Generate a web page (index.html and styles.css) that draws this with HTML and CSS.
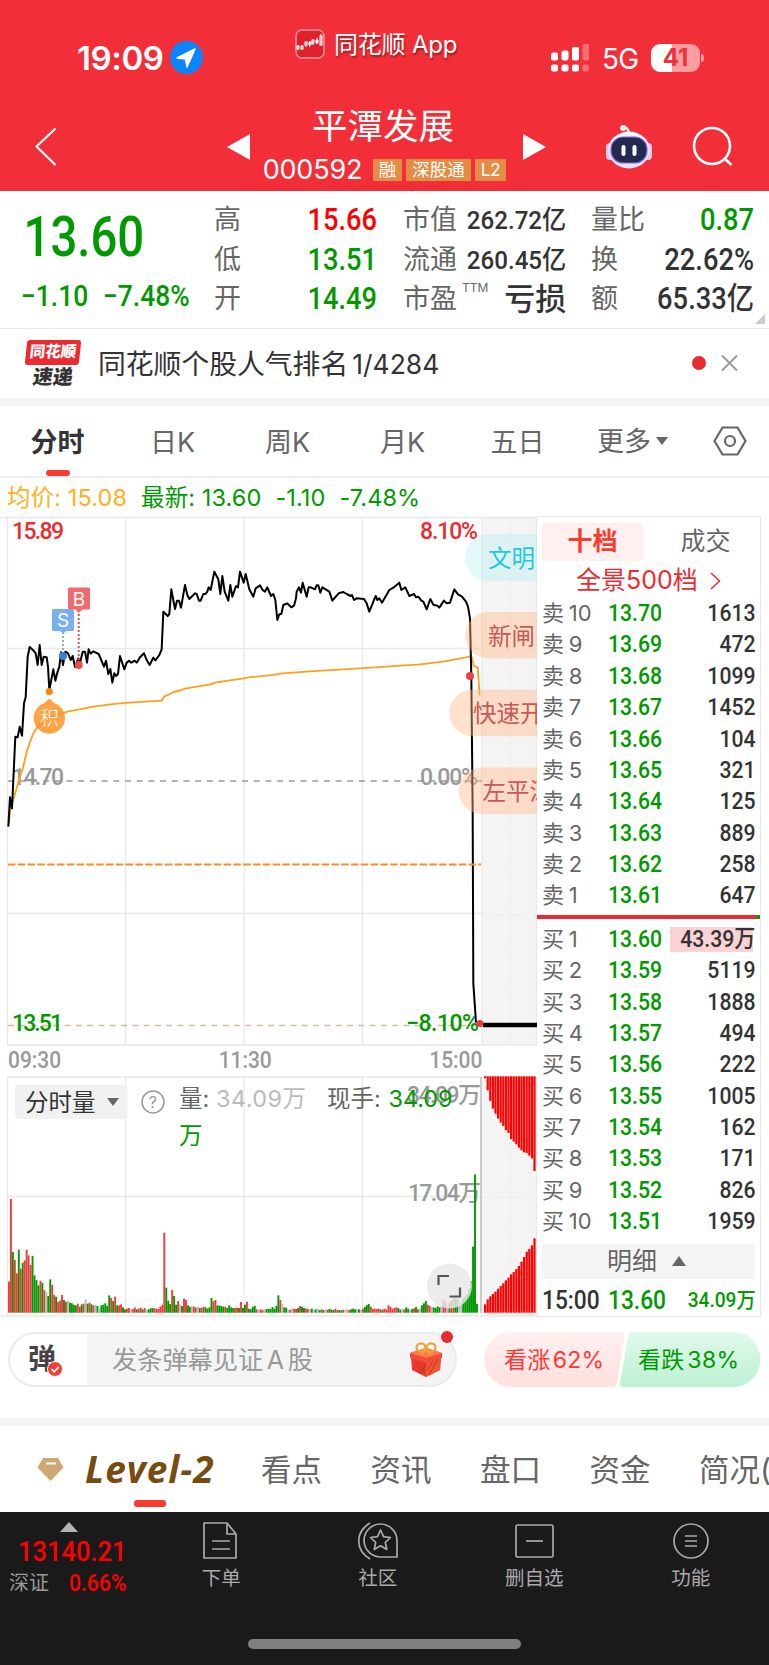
FILE: index.html
```html
<!DOCTYPE html>
<html lang="zh-CN">
<head>
    <meta charset="UTF-8">
    <meta name="viewport" content="width=device-width, initial-scale=1.0">
    <title>平潭发展 000592</title>
    <link rel="stylesheet" href="styles.css">
</head>
<body>
    <header class="header">
        <div class="status-bar">
            <div class="status-left">
                <span class="clock">19:09</span>
                <svg width="33" height="33" viewBox="0 0 33 33"><circle cx="16.5" cy="16.5" r="16.5" fill="#0a84ff"/><path d="M7 17 L25 8 L17 26 L15.500 18 Z" fill="#fff" stroke="#fff" stroke-width="1.500" stroke-linejoin="round"/></svg>
            </div>
            <div class="status-app">
                <svg width="30" height="30" viewBox="0 0 30 30"><rect x="1" y="1" width="28" height="28" rx="6" fill="#e0202a" stroke="#f79a9e" stroke-width="1.500"/><g stroke="#fff" stroke-width="1" fill="none"><path d="M3 16v5M7 16v5M11 12v6M14.500 12v6M18 10v6M22 9v6M26 5v12"/><path d="M2 17h2v3H2zM14 13h2v3h-2zM21 11h2v3h-2z" fill="#fff"/><rect x="6" y="17" width="2" height="3"/><rect x="10" y="13" width="2" height="3"/><rect x="17" y="11" width="2" height="3"/><rect x="25" y="7" width="2" height="9"/></g></svg>
                <span>同花顺 App</span>
            </div>
            <div class="status-right">
                <svg width="39" height="28" viewBox="0 0 39 28" fill="#fff"><rect x="0" y="8.500" width="7" height="8" rx="2"/><rect x="10.500" y="6.500" width="7" height="10" rx="2"/><rect x="21" y="3" width="7" height="13.500" rx="2"/><rect x="0" y="20.500" width="7" height="7" rx="2"/><rect x="10.500" y="20.500" width="7" height="7" rx="2"/><rect x="21" y="20.500" width="7" height="7" rx="2"/><g opacity=".3"><rect x="31.500" y="0" width="6.500" height="16.500" rx="2"/><rect x="31.500" y="20.500" width="6.500" height="7" rx="2"/></g></svg>
                <span class="network">5G</span>
                <div class="battery">41</div>
            </div>
        </div>
        <div class="nav">
            <svg class="nav-back" width="22" height="40" viewBox="0 0 22 40"><path d="M20.500 1.500 L1.500 19.500 L20.500 38" fill="none" stroke="#fff" stroke-width="2.200"/></svg>
            <svg class="nav-prev" width="23" height="26" viewBox="0 0 23 26"><path d="M23 0v26L0 13z" fill="#fff"/></svg>
            <div class="nav-title">
                <h1>平潭发展</h1>
                <div class="nav-code">
                    <span>000592</span>
                    <b>融</b><b>深股通</b><b>L2</b>
                </div>
            </div>
            <svg class="nav-next" width="23" height="26" viewBox="0 0 23 26"><path d="M0 0v26L23 13z" fill="#fff"/></svg>
            <svg class="nav-robot" width="48" height="46" viewBox="0 0 48 46">
                <path d="M24 9 C23 5 21 3 19 3" fill="none" stroke="#f4eff5" stroke-width="2.500"/><circle cx="18" cy="4" r="3" fill="#f4eff5"/>
                <rect x="1" y="19" width="8" height="17" rx="4" fill="#d4ccf2"/><rect x="39" y="19" width="8" height="17" rx="4" fill="#d4ccf2"/>
                <ellipse cx="24" cy="26" rx="21" ry="18.500" fill="#e6e3fa"/><ellipse cx="24" cy="23" rx="19" ry="15" fill="#f8f4fb"/>
                <rect x="6" y="13" width="36" height="26" rx="12" fill="#232a50" stroke="#8570d8" stroke-width="1.200"/>
                <rect x="16.500" y="21" width="4" height="11" rx="2" fill="#fff"/><rect x="27.500" y="21" width="4" height="11" rx="2" fill="#fff"/>
            </svg>
            <svg class="nav-search" width="42" height="42" viewBox="0 0 42 42" fill="none" stroke="#fff" stroke-width="2.600"><circle cx="20" cy="20" r="18"/><path d="M32 32l7.500 7"/></svg>
        </div>
    </header>

    <section class="quote">
        <div class="quote-price">
            <div class="num price down">13.60</div>
            <div class="change down"><span class="num">−1.10</span><span class="num">−7.48%</span></div>
        </div>
        <dl class="stats stats-a">
            <dt>高</dt><dd class="num up">15.66</dd>
            <dt>低</dt><dd class="num down">13.51</dd>
            <dt>开</dt><dd class="num down">14.49</dd>
        </dl>
        <dl class="stats stats-b">
            <dt>市值</dt><dd class="num small">262.72亿</dd>
            <dt>流通</dt><dd class="num small">260.45亿</dd>
            <dt>市盈<sup>TTM</sup></dt><dd class="loss">亏损</dd>
        </dl>
        <dl class="stats stats-c">
            <dt>量比</dt><dd class="num down">0.87</dd>
            <dt>换</dt><dd class="num">22.62%</dd>
            <dt>额</dt><dd class="num">65.33亿</dd>
        </dl>
        <i class="corner"></i>
    </section>

    <section class="news">
        <div class="news-logo"><b>同花顺</b><i>速递</i></div>
        <p>同花顺个股人气排名<span>1/4284</span></p>
        <i class="dot"></i>
        <svg width="17" height="16" viewBox="0 0 17 16"><path d="M1 0.500l15 15M16 0.500l-15 15" stroke="#999" stroke-width="2"/></svg>
    </section>

    <nav class="period-tabs">
        <a class="active">分时</a>
        <a>日K</a>
        <a>周K</a>
        <a>月K</a>
        <a>五日</a>
        <a>更多<i class="caret"></i></a>
        <a class="setting"><svg width="34" height="30" viewBox="0 0 34 30" fill="none" stroke="#666" stroke-width="2.200"><path d="M9.500 1.500h15L32.500 15l-8 13.500h-15L1.500 15z"/><circle cx="17" cy="15" r="5"/></svg></a>
    </nav>

    <div class="legend">
        <span class="avg">均价: 15.08</span>
        <span>最新: 13.60</span>
        <span>-1.10</span>
        <span>-7.48%</span>
    </div>

    <main class="board">
        <div class="charts">
            <svg class="price-chart" width="537" height="530" viewBox="0 516 537 530">
                <rect x="482" y="517" width="55" height="528" fill="#f4f4f4"/>
                <g class="grid">
                    <path d="M0 517.500H537M7.500 517V1045M125.500 517V1045M244 517V1045M362.500 517V1045M482 517V1045M7 648.500H482M7 913.500H482M7 1045H537M536.500 517V1045"/>
                    <path d="M510.500 517V1045M482 650H537M482 915H537" stroke-dasharray="2 3"/>
                </g>
                <path d="M8 781H482" stroke="#999" stroke-width="1.500" stroke-dasharray="6 5.700"/>
                <path d="M8 1025.500H478" stroke="#d8bd94" stroke-width="1.300" stroke-dasharray="6 5.300"/>
                <g class="axis-text">
                    <text x="12" y="539" textLength="52" fill="#eb2b30">15.89</text>
                    <text x="420" y="539" textLength="58" fill="#eb2b30">8.10%</text>
                    <text x="12" y="785" textLength="52" fill="#999">14.70</text>
                    <text x="420" y="785" textLength="58" fill="#999">0.00%</text>
                    <text x="12" y="1030.500" textLength="51" fill="#090">13.51</text>
                    <text x="406" y="1030.500" textLength="73" fill="#090">−8.10%</text>
                </g>
                <g transform="translate(0 510) scale(.33333)" fill="none" stroke-linejoin="round">
                    <polyline stroke="#ff9f1c" stroke-width="5.500" points="26,940 33,885 42,862 50,835 60,800 70,770 80,725 92,690 100,670 115,648 130,635 150,622 180,612 205,604 235,599 280,590 350,581 400,577 485,572 492,560 510,552 520,546 545,540 555,536 590,530 628,524 645,518 730,505 745,502 800,497 825,494 840,491 930,484 1080,475 1260,463 1330,455 1410,440 1416,442 1421,468 1433,472 1439,556"/>
                    <polyline stroke="#000" stroke-width="6" points="25,950 30,862 36,895 46,680 53,682 59,650 66,677 72,580 77,562 83,440 89,411 101,422 107,430 113,465 119,405 125,465 131,440 140,442 144,470 148,540 160,478 166,512 172,488 178,470 183,427 189,465 196,425 204,430 212,450 218,438 225,471 235,445 241,455 248,425 255,425 261,458 266,418 272,431 280,424 296,432 312,470 318,452 325,492 331,477 337,518 343,490 348,498 354,492 360,438 373,478 380,458 387,452 394,458 404,452 410,458 420,442 432,430 440,450 449,465 460,443 466,451 478,435 485,418 490,305 503,318 508,312 514,238 525,297 531,272 537,272 543,293 555,225 562,255 568,267 585,250 590,252 597,272 602,272 610,252 616,252 622,245 626,232 632,240 643,185 655,208 661,252 667,198 674,245 685,272 691,225 697,260 708,228 714,232 720,185 731,218 737,192 748,238 760,260 767,235 780,226 788,240 795,245 802,232 813,258 820,252 826,270 832,330 838,313 844,312 850,285 862,280 874,292 882,287 888,265 890,245 897,232 903,248 908,218 920,260 926,232 932,232 945,238 950,226 955,226 961,248 967,232 988,245 997,272 1016,250 1030,246 1040,252 1052,258 1056,255 1062,270 1070,265 1092,267 1100,280 1108,305 1127,258 1132,270 1138,265 1146,278 1168,240 1180,233 1198,218 1204,240 1216,232 1228,258 1242,252 1248,262 1255,260 1264,272 1270,275 1280,298 1291,267 1300,284 1312,287 1318,293 1332,272 1340,280 1350,278 1363,238 1374,253 1386,260 1398,275 1404,290 1410,325 1414,500 1418,900 1420,1420 1428,1538"/>
                </g>
                <path d="M8 864.500H481" stroke="#ff8a24" stroke-width="2" stroke-dasharray="7.500 2.300"/>
                <path d="M483 1025H537" stroke="#000" stroke-width="4.500"/>
                <circle cx="480" cy="1023.500" r="3.500" fill="#f0383d"/>
                <circle cx="470" cy="676" r="4" fill="#ea4145"/>

                <!-- trade markers -->
                <path d="M63 632V654" stroke="#7db0f2" stroke-width="2" stroke-dasharray="2 2"/>
                <path d="M78.700 610V662" stroke="#ef4a50" stroke-width="2" stroke-dasharray="2 2"/>
                <circle cx="63" cy="656" r="4" fill="#397fd0"/>
                <circle cx="78.700" cy="665" r="4" fill="#ef4a50"/>
                <rect x="52" y="609" width="22" height="22" rx="1.500" fill="#78aff3"/><path d="M59 630h8l-4 4z" fill="#78aff3"/>
                <rect x="68" y="587.500" width="22" height="22" rx="1.500" fill="#f06a6d"/><path d="M75 609h8l-4 4z" fill="#f06a6d"/>
                <text class="marker" x="63" y="627">S</text>
                <text class="marker" x="79" y="605.500">B</text>
                <circle cx="49.300" cy="691.500" r="3.500" fill="#ff7f0e"/>
                <circle cx="49.300" cy="718" r="15.700" fill="#ff962e" opacity=".88"/><path d="M44 703.500l5.300-5 5.300 5z" fill="#ff9f48"/>
                <text class="marker light" x="49.300" y="724.500">积</text>

                <!-- bullet comments -->
                <g class="bullets">
                    <path class="cyan" d="M537 534H488.500a23.300 23.300 0 0 0 0 47H537z"/>
                    <path d="M537 612H488.500a23.300 23.300 0 0 0 0 46.600H537z"/>
                    <path d="M537 689.700H472.500a23.300 23.300 0 0 0 0 46.600H537z"/>
                    <path d="M537 767.500H482a23.300 23.300 0 0 0 0 46.600H537z"/>
                    <text class="cyan-text" x="488" y="566.500">文明</text>
                    <text x="488" y="644.500">新闸</text>
                    <text x="473" y="722">快速开</text>
                    <text x="482.500" y="799.500">左平潭</text>
                </g>
            </svg>

            <div class="time-axis"><span class="num">09:30</span><span class="num">11:30</span><span class="num">15:00</span></div>

            <svg class="volume-chart" width="537" height="241" viewBox="0 1076 537 241">
                <rect x="482" y="1077" width="55" height="239" fill="#f4f4f4"/>
                <g class="grid">
                    <path d="M7 1077H482M7.500 1077V1316M125.500 1077V1316M244 1077V1316M362.500 1077V1316M7 1196.500H482M0 1316H537M536.500 1077V1316"/>
                    <path d="M510.500 1077V1316M482 1197.500H537" stroke-dasharray="2 3"/>
                </g>
                <path d="M481 1077V1313" stroke="#bbb" stroke-width="1.500"/>
                <g class="axis-text">
                    <text x="407" y="1103" textLength="74" fill="#999">34.09万</text>
                    <text x="408" y="1201" textLength="73" fill="#999">17.04万</text>
                </g>
                <g id="volumeBars"></g>
                <g id="auctionBars"></g>

                <rect x="15" y="1084.500" width="112.500" height="34.500" rx="3" fill="#f1f1f1"/>
                <path d="M107 1098h12l-6 8z" fill="#666"/>
                <circle cx="153" cy="1102" r="11" fill="none" stroke="#999" stroke-width="1.500"/>
                <g class="volume-text">
                    <text x="25" y="1110.500" fill="#333">分时量</text>
                    <text x="148.800" y="1107.500" class="help">?</text>
                    <text x="179" y="1107">量:</text>
                    <text x="216" y="1106.500" textLength="90" fill="#bbb">34.09万</text>
                    <text x="327" y="1107">现手:</text>
                    <text x="388.500" y="1106.500" textLength="64" fill="#090">34.09</text>
                    <text x="179" y="1144" fill="#090">万</text>
                </g>
                <circle cx="449.500" cy="1286" r="22.500" fill="#e8e8e8" opacity=".82"/>
                <path d="M438.500 1285v-9h10.500M460 1287.500v9h-10.500" fill="none" stroke="#555" stroke-width="2.200"/>
            </svg>
        </div>

        <aside class="book">
            <div class="book-tabs"><b>十档</b><span>成交</span></div>
            <div class="book-more">全景500档 <svg width="11" height="18" viewBox="0 0 11 18"><path d="M1 1l8.500 8L1 17" fill="none" stroke="#eb2b30" stroke-width="1.500"/></svg></div>
            <div class="book-rows" id="asks"></div>
            <div class="book-line"></div>
            <div class="book-rows" id="bids"></div>
            <div class="book-detail">明细<i></i></div>
            <div class="book-last"><span class="num">15:00</span><span class="num down">13.60</span><span class="num down">34.09万</span></div>
        </aside>
    </main>

    <section class="danmaku">
        <div class="danmaku-input">
            <div class="danmaku-switch">弹<svg width="16" height="16" viewBox="0 0 16 16"><circle cx="8" cy="8" r="7.500" fill="#fb3a36" stroke="#fff"/><path d="M4.500 8l2.700 2.800 4.500-5" fill="none" stroke="#fff" stroke-width="1.800"/></svg></div>
            <span class="placeholder">发条弹幕见证 A 股</span>
            <svg class="gift" width="34" height="36" viewBox="0 0 34 36">
                <path d="M2 14l15 5v16L3 28zM32 14l-15 5v16l14-7z" fill="#e6382c"/><path d="M17 19l15-5-1 14-14 7z" fill="#f0562f"/>
                <path d="M1 11l16-5 16 5v5l-16 5-16-5z" fill="#f04c36"/><path d="M1 11l16-5 16 5-16 5z" fill="#ff7852"/>
                <path d="M17 22l-6 10M29 17l-9 16M24 19l-6 9" stroke="#c92a24"/>
                <g fill="none" stroke="#eda234" stroke-width="2.200"><ellipse cx="12" cy="5.500" rx="4.500" ry="4.200"/><ellipse cx="22" cy="5.500" rx="4.500" ry="4.200"/><path d="M17 7l-5 6M17 7l5 6"/></g>
            </svg>
            <i class="badge"></i>
        </div>
        <div class="vote">
            <svg width="277" height="55" viewBox="0 0 277 55">
                <defs>
                    <linearGradient id="bull" x2="0" y2="1"><stop offset="0" stop-color="#fff0ef"/><stop offset="1" stop-color="#ffe0de"/></linearGradient>
                    <linearGradient id="bear" x2="0" y2="1"><stop offset="0" stop-color="#e1f9ec"/><stop offset="1" stop-color="#bdf0d4"/></linearGradient>
                </defs>
                <path d="M27.500 0H138q3 0 2.600 3L133 51q-1 4-5 4H27.500a27.500 27.500 0 0 1 0-55z" fill="url(#bull)"/>
                <path d="M249 0H148q-3 0-3.600 3L136 51q-.5 4 3 4H249a27.500 27.500 0 0 0 0-55z" fill="url(#bear)"/>
                <text x="20" y="36" textLength="100" fill="#fb3a36">看涨 62%</text>
                <text x="154" y="36" textLength="101" fill="#090">看跌 38%</text>
            </svg>
        </div>
    </section>

    <nav class="info-tabs">
        <svg width="27" height="25" viewBox="0 0 27 25"><path d="M6 1h15l5.500 9.500L13.500 24 .5 10.500z" fill="#cda874"/><path d="M9 6.500h10" stroke="#fff" stroke-width="2"/></svg>
        <a class="level2">Level-2</a>
        <a>看点</a>
        <a>资讯</a>
        <a>盘口</a>
        <a>资金</a>
        <a>简况(F10)</a>
    </nav>

    <footer class="toolbar">
        <div class="index">
            <i></i>
            <div class="num index-value">13140.21</div>
            <div class="index-row"><span>深证</span><span class="num">0.66%</span></div>
        </div>
        <div class="tools">
            <a><svg width="40" height="40" viewBox="0 0 40 40"><path d="M3 2h23l9 11v24H3zM26 2v11h9M11 20h18M11 28h18"/></svg>下单</a>
            <a><svg width="42" height="40" viewBox="0 0 42 40"><path d="M13 2C-2 11-2 29 13 38M40 36H24a16.500 16.500 0 1 1 16-16.500z"/><path d="M23.500 9l3 6.700 7 .8-5.200 4.800 1.500 7.200-6.300-3.700-6.300 3.700 1.500-7.200-5.200-4.800 7-.8z"/></svg>社区</a>
            <a><svg width="40" height="40" viewBox="0 0 40 40"><rect x="2" y="4" width="37" height="32" rx="1.500"/><path d="M12 20h17"/></svg>删自选</a>
            <a><svg width="40" height="40" viewBox="0 0 40 40"><circle cx="20" cy="20" r="17"/><path d="M14 15h12M14 20h12M14 25h12"/></svg>功能</a>
        </div>
        <div class="home-bar"></div>
    </footer>

    <script src="chart.js"></script>
</body>
</html>
```

FILE: styles.css
```css
* {
    box-sizing: border-box;
    margin: 0;
    padding: 0;
}

body {
    width: 769px;
    font-family: Inter, 'Noto Sans CJK SC', sans-serif;
    background-color: #fff;
    color: #333;
    overflow-x: hidden;
}

svg {
    display: block;
    flex-shrink: 0;
}

i {
    font-style: normal;
}

.num {
    font-family: Roboto, 'Noto Sans CJK SC', sans-serif;
    font-weight: 500;
    white-space: nowrap;
    transform: scaleX(0.91);
    transform-origin: left center;
}

.up {
    color: #f00;
}

.down {
    color: #090;
}

/* header */
.header {
    height: 191px;
    background-color: #f22f38;
    color: #fff;
}

.status-bar {
    display: flex;
    height: 90px;
    padding-left: 77px;
}

.status-left {
    display: flex;
    align-items: center;
    width: 218px;
    padding-top: 25px;
}

.clock {
    width: 93px;
    font-size: 33px;
    font-weight: 600;
    letter-spacing: -0.4px;
}

.status-app {
    display: flex;
    align-items: center;
    gap: 9px;
    width: 256px;
    height: 88px;
    font-size: 24px;
    text-shadow: 1px 2px 2px rgba(0, 0, 0, 0.4);
    letter-spacing: -0.2px;
}

.status-app span {
    margin-top: -3px;
}

.status-right {
    display: flex;
    align-items: center;
    padding-top: 25px;
}

.network {
    width: 61px;
    padding: 2px 0 0 12px;
    font-size: 28px;
    letter-spacing: -0.8px;
}

.battery {
    width: 49px;
    height: 28px;
    border-radius: 9px;
    background: linear-gradient(90deg, #fff 42%, #f99da1 42%);
    color: #f22f38;
    font-size: 24px;
    font-weight: 700;
    line-height: 28px;
    text-align: center;
}

.battery::after {
    content: '';
    float: right;
    width: 3px;
    height: 8px;
    margin: 10px -4px 0 0;
    border-radius: 0 3px 3px 0;
    background-color: #f99da1;
}

.nav {
    display: flex;
    align-items: center;
    height: 101px;
    padding: 12px 0 0 35px;
}

.nav-back {
    margin-right: 170px;
}

.nav-title {
    display: flex;
    flex-direction: column;
    align-items: center;
    width: 273px;
}

.nav-title h1 {
    height: 56px;
    padding: 3px 7px 0 0;
    font-size: 35.5px;
    font-weight: 400;
    line-height: 56px;
}

.nav-code {
    display: flex;
    align-items: center;
    gap: 4px;
    height: 45px;
    padding: 0 4px 10px 0;
}

.nav-code span {
    width: 106px;
    font-size: 27px;
    letter-spacing: -0.2px;
}

.nav-code b {
    height: 22px;
    padding: 0 6px;
    background-color: #e28d45;
    font-size: 17.5px;
    font-weight: 400;
    line-height: 22px;
}

.nav-code b:last-child {
    letter-spacing: -0.5px;
}

.nav-robot {
    margin-left: 59px;
}

.nav-search {
    margin-left: 39px;
}

/* quote */
.quote {
    position: relative;
    display: flex;
    height: 138px;
    padding-top: 9px;
    border-bottom: 1px solid #e8e8e8;
}

.quote-price {
    width: 214px;
    padding-left: 21px;
}

.price {
    height: 75px;
    padding-left: 3px;
    font-size: 55px;
    line-height: 75px;
    transform: scaleX(0.86);
}

.change {
    display: flex;
    height: 42px;
    font-size: 29px;
    line-height: 42px;
}

.change .num {
    width: 82px;
    transform: scaleX(0.91);
}

.stats {
    display: grid;
    grid-template-columns: auto 1fr;
    grid-template-rows: repeat(3, 39.5px);
    line-height: 39.5px;
}

.stats dt {
    color: #666;
    font-size: 27px;
    white-space: nowrap;
}

.stats dd {
    text-align: right;
    font-size: 31px;
    transform-origin: right center;
}

.stats dd.num:not(.small) {
    transform: scaleX(0.88);
}

.stats dd.small {
    font-size: 26.5px;
}

.stats dd.loss {
    font-weight: 500;
}

.stats-a {
    width: 163px;
    margin-right: 26px;
}

.stats-b {
    width: 163px;
    margin-right: 25px;
}

.stats-b dt {
    width: 54px;
}

.stats-c {
    width: 163px;
    grid-template-columns: 27px 1fr;
}

.stats sup {
    position: absolute;
    top: 81px;
    margin-left: 5px;
    font-size: 12px;
    line-height: 32px;
}

.corner {
    position: absolute;
    right: 4px;
    bottom: 4px;
    border-left: 10px solid transparent;
    border-bottom: 10px solid #ccc;
}

/* news */
.news {
    display: flex;
    align-items: center;
    height: 77px;
    padding: 0 31px 0 24px;
    border-bottom: 8px solid #f4f4f4;
}

.news-logo {
    display: flex;
    flex-direction: column;
    align-items: center;
    width: 57px;
    height: 47px;
    margin-right: 17px;
}

.news-logo b {
    width: 54px;
    height: 25px;
    border-radius: 3px;
    background-color: #e82c32;
    color: #fff;
    font-size: 15.5px;
    font-weight: 900;
    line-height: 24px;
    text-align: center;
    transform: skewX(-6deg);
}

.news-logo i {
    height: 22px;
    font-size: 20px;
    font-weight: 900;
    line-height: 25px;
    transform: skewX(-8deg);
}

.news p {
    flex: 1;
    padding-bottom: 4px;
    font-size: 27.8px;
    white-space: nowrap;
}

.news p span {
    margin-left: 4px;
    font-size: 26.5px;
}

.dot {
    width: 14px;
    height: 14px;
    margin: 0 15px 2px 0;
    border-radius: 50%;
    background-color: #e82c32;
}

.news > svg {
    margin-bottom: 2px;
}

/* period tabs */
.period-tabs {
    display: flex;
    height: 72px;
    border-bottom: 2px solid #efefef;
}

.period-tabs a {
    display: flex;
    flex-direction: column;
    align-items: center;
    flex: 0 0 115px;
    color: #666;
    font-size: 27px;
    line-height: 73px;
}

.period-tabs .active {
    color: #333;
    font-weight: 700;
}

.period-tabs .active::after {
    content: '';
    width: 24px;
    height: 6px;
    margin-top: -9px;
    border-radius: 3px;
    background-color: #fb3a2f;
}

.period-tabs a:nth-child(6) {
    flex-direction: row;
    justify-content: center;
    gap: 5px;
}

.caret {
    border-left: 6px solid transparent;
    border-right: 6px solid transparent;
    border-top: 8px solid #666;
}

.period-tabs .setting {
    flex: 1;
    justify-content: center;
}

.legend {
    display: flex;
    height: 38px;
    padding-left: 7px;
    color: #090;
    font-size: 23.5px;
    line-height: 39px;
    letter-spacing: 0.1px;
    gap: 14px;
}

.legend .avg {
    color: #ffb01c;
}

/* chart and order book */
.board {
    display: flex;
    height: 801px;
}

.charts {
    width: 537px;
}

.grid {
    fill: none;
    stroke: #e8e8e8;
    stroke-width: 1.3;
}

.axis-text text {
    font-family: Roboto, 'Noto Sans CJK SC', sans-serif;
    font-size: 23px;
    font-weight: 500;
}

.marker {
    fill: #fff;
    font-size: 19px;
    text-anchor: middle;
}

.marker.light {
    font-weight: 300;
}

.bullets path {
    fill: #ffb888;
    fill-opacity: 0.42;
}

.bullets .cyan {
    fill: #b9eef0;
    fill-opacity: 0.4;
}

.bullets text {
    fill: #c45b59;
    font-size: 23.5px;
}

.bullets .cyan-text {
    fill: #1dc9dc;
}

.time-axis {
    display: flex;
    justify-content: space-between;
    height: 30px;
    padding: 0 55px 0 8px;
    color: #999;
    font-size: 23px;
    line-height: 29px;
}

.time-axis .num:nth-child(2) {
    transform-origin: center;
}

.time-axis .num:nth-child(3) {
    transform-origin: right center;
}

.volume-text text {
    fill: #666;
    font-size: 23.5px;
}

.volume-text text[fill="#333"] {
    fill: #333;
}

.volume-text text[fill="#bbb"] {
    fill: #bbb;
}

.volume-text text[fill="#090"] {
    fill: #090;
}

.volume-text .help {
    fill: #999;
    font-size: 16px;
}

.book {
    width: 224px;
    border: 1px solid #e8e8e8;
    border-left: none;
    padding: 5px 4px 0 5px;
}

.book-tabs {
    display: flex;
    height: 38px;
    margin-top: 1px;
    font-size: 25px;
    line-height: 37px;
    text-align: center;
}

.book-tabs b {
    width: 101px;
    border-radius: 4px;
    background-color: #fff0f0;
    color: #fb3a2f;
    font-weight: 700;
}

.book-tabs span {
    flex: 1;
    padding-left: 12px;
    color: #666;
}

.book-more {
    display: flex;
    align-items: center;
    gap: 12px;
    height: 37px;
    padding: 2px 0 0 34px;
    color: #eb2b30;
    font-size: 25px;
    line-height: 35px;
}

.book-rows div,
.book-last {
    display: flex;
    height: 31.38px;
    line-height: 31.38px;
    font-size: 23.3px;
}

.book-rows .label {
    width: 66px;
    color: #666;
    font-size: 22px;
    white-space: nowrap;
    word-spacing: -1.5px;
}

.book-rows .qty {
    flex: 1;
    text-align: right;
    transform-origin: right center;
}

.book-rows .big {
    background: linear-gradient(#fbd3d4, #fbd3d4) right 3px center / 83px 25px no-repeat;
}

.book-line {
    height: 4px;
    margin: 3px -4px 4px -5px;
    background: linear-gradient(90deg, #e82c32 220px, #090 220px);
}

#bids {
    padding-top: 1px;
}

.book-detail {
    display: flex;
    align-items: center;
    justify-content: center;
    gap: 15px;
    height: 35px;
    margin: 6px 1px 6px 0;
    padding-right: 4px;
    background-color: #f4f4f4;
    color: #666;
    font-size: 25px;
    line-height: 33px;
}

.book-detail i {
    border-left: 7px solid transparent;
    border-right: 7px solid transparent;
    border-bottom: 10px solid #666;
}

.book-last span:nth-child(1) {
    width: 66px;
    font-size: 25px;
}

.book-last span:nth-child(2) {
    font-size: 25px;
}

.book-last span:nth-child(3) {
    margin-left: auto;
    font-size: 21px;
    transform-origin: right center;
}

/* danmaku */
.danmaku {
    display: flex;
    height: 109px;
    padding: 15px 8px 0;
    border-bottom: 8px solid #f4f4f4;
}

.danmaku-input {
    position: relative;
    display: flex;
    align-items: center;
    width: 450px;
    height: 55px;
    margin-right: 27px;
    border: 2px solid #ebebeb;
    border-radius: 28px;
    background: linear-gradient(90deg, #fff 77px, #f4f4f4 77px);
}

.danmaku-switch {
    display: flex;
    align-items: flex-end;
    width: 102px;
    height: 36px;
    padding-left: 18px;
    font-size: 28px;
    font-weight: 700;
    line-height: 38px;
    color: #444;
}

.danmaku-switch svg {
    margin: 0 0 1px -9px;
}

.placeholder {
    flex: 1;
    padding-bottom: 4px;
    color: #999;
    font-size: 25.2px;
    word-spacing: -3.5px;
}

.gift {
    margin-right: 12px;
}

.badge {
    position: absolute;
    top: -3px;
    right: 2px;
    width: 12px;
    height: 12px;
    border-radius: 50%;
    background-color: #e82c32;
}

.vote text {
    font-size: 23px;
    word-spacing: -4px;
}

/* info tabs */
.info-tabs {
    display: flex;
    align-items: center;
    height: 86px;
    padding-left: 37px;
    overflow: hidden;
    color: #666;
    font-size: 30.5px;
    white-space: nowrap;
}

.info-tabs a {
    flex: 0 0 109.5px;
    height: 86px;
    line-height: 88px;
}

.info-tabs .level2 {
    flex-basis: 176px;
    margin-left: 21px;
    color: #774c10;
    font-family: 'Open Sans', sans-serif;
    font-size: 37px;
    font-style: italic;
    font-weight: 700;
    letter-spacing: 1px;
    line-height: 86px;
}

.info-tabs .level2::after {
    content: '';
    display: block;
    width: 32px;
    height: 7px;
    margin: -12px 0 0 49px;
    border-radius: 3px;
    background-color: #fb3a2f;
}

/* toolbar */
.toolbar {
    display: grid;
    grid-template-columns: 142px 1fr;
    grid-template-rows: 127px 26px;
    height: 153px;
    background-color: #1a1a1a;
}

.index {
    color: #f00;
}

.index i {
    display: block;
    width: 18px;
    margin: 10px 0 0 60px;
    border-left: 9px solid transparent;
    border-right: 9px solid transparent;
    border-bottom: 10px solid #b5b5b5;
}

.index-value {
    margin-left: 18px;
    font-size: 28px;
    line-height: 39px;
}

.index-row {
    display: flex;
    height: 26px;
    padding-left: 9px;
    font-size: 20px;
    line-height: 24px;
    color: #999;
}

.index-row .num {
    margin-left: 20px;
    color: #f00;
    font-size: 24px;
    transform: scaleX(0.88);
}

.tools {
    display: flex;
    padding: 9px 0 0 1px;
}

.tools a {
    display: flex;
    flex-direction: column;
    align-items: center;
    width: 156.5px;
    color: #aaa;
    font-size: 19.5px;
    line-height: 35px;
}

.tools svg {
    fill: none;
    stroke: #aaa;
    stroke-width: 1.7;
    stroke-linejoin: round;
}

.home-bar {
    grid-column: 1 / 3;
    justify-self: center;
    width: 273px;
    height: 10px;
    border-radius: 5px;
    background-color: #808080;
}
```

FILE: chart.js
```js
const SVG_NS = 'http://www.w3.org/2000/svg';

// r = up, g = down, x = flat; number is the bar height in thirds of a pixel
const opening = 'r93 r341 g182 r158 r118 g189 r132 g150 r157 r189 r172 r143 g170 g112 g98 g82 r96 g90 r68 x62 g50 g100 r84 r53 g48 r32 r36 r53 g38 r33 x36 g30 g28 g24 g22 r27 r18 g25 r27 x40 g27 r30 g25 r22 x24 g20 x14 g22 g24 g28 g20 g52 r44 g35 r48 g22 r22 r25 g16 g10 r12 r14 x10 r11 r16 g10 r12 r15 g10 r14 x9 g10 g13 g14 r13 r12 r11 r18 r24';
const middle = 'r240 g75 g36 g26 r68 g50 g24 r35 x26 g20 r42 r38 g22 g18 x19 r18 r16 x17 g14 r15 r18 g16 g12 g16 g44 r34 r38 g22 g21 g20 g18 r18 g14 g22 g16 g14 r14 r15 g14 r32 g14 g24 r33 g12 g10 g18 g20 r10 x9 r10 r8 x10 g11 g12 g11 g17 g12 g20 g52 r38 x26 g16 g15 x9 r9 x12 r12 r11 g14 r20 g18 g14 r12 r11 x10 g12 x9 g10 x12 g8';
const closing = 'r10 g8 x9 r9 g11 g9 g8 r12 r8 g8 g7 r9 x8 x10 r8 g10 g12 g10 x11 g10 x9 r12 g17 g23 g26 r18 r12 r12 r11 r12 r10 g9 r12 r10 r22 r18 r12 r14 r16 g14 g9 x12 r10 g16 g12 x9 g11 r13 g17 r10 x12 g22 g28 g35 r24 r20 x16 g16 g14 g19 g16 x22 r40 r32 x24 g30 r36 r42 g45 g42 x36 x34 g42 g48 g55 g70 g95 g198 g415 g26';
const bars = `${opening} ${middle} ${closing}`.split(' ');
const barColors = { r: '#ee3a3d', g: '#090', x: '#bbb' };

function addBar(parent, x, y, width, height, fill) {
    const rect = document.createElementNS(SVG_NS, 'rect');
    rect.setAttribute('x', x);
    rect.setAttribute('y', y);
    rect.setAttribute('width', width);
    rect.setAttribute('height', height);
    rect.setAttribute('fill', fill);
    parent.appendChild(rect);
}

const volume = document.getElementById('volumeBars');
const pitch = 470 / bars.length;
bars.forEach((bar, i) => {
    const height = Number(bar.slice(1)) / 3;
    addBar(volume, 8 + i * pitch, 1312.7 - height, 1.9, height, barColors[bar[0]]);
});

// call auction volume, drawn from both edges of the strip
const auction = document.getElementById('auctionBars');
const upper = [6, 42, 74, 97, 112, 127, 139, 149, 162, 170, 188, 196, 204, 214, 222, 228, 230, 238, 246, 284];
const lower = [25, 40, 49, 56, 63, 72, 80, 88, 97, 105, 115, 122, 131, 140, 153, 167, 183, 191, 202, 223];
upper.forEach((h, i) => addBar(auction, 484 + i * 2.6, 1076.3, 2.2, h / 3, '#f00'));
lower.forEach((h, i) => addBar(auction, 484 + i * 2.6, 1312.7 - h / 3, 2.2, h / 3, '#f00'));

// order book
const asks = [
    [10, '13.70', '1613'], [9, '13.69', '472'], [8, '13.68', '1099'], [7, '13.67', '1452'], [6, '13.66', '104'],
    [5, '13.65', '321'], [4, '13.64', '125'], [3, '13.63', '889'], [2, '13.62', '258'], [1, '13.61', '647']
];
const bids = [
    [1, '13.60', '43.39万'], [2, '13.59', '5119'], [3, '13.58', '1888'], [4, '13.57', '494'], [5, '13.56', '222'],
    [6, '13.55', '1005'], [7, '13.54', '162'], [8, '13.53', '171'], [9, '13.52', '826'], [10, '13.51', '1959']
];

function renderRows(id, side, rows) {
    document.getElementById(id).innerHTML = rows.map(([level, price, qty]) => `
        <div class="${qty.includes('万') ? 'big' : ''}">
            <span class="label">${side} ${level}</span>
            <span class="num down">${price}</span>
            <span class="num qty">${qty}</span>
        </div>`).join('');
}

renderRows('asks', '卖', asks);
renderRows('bids', '买', bids);
```
